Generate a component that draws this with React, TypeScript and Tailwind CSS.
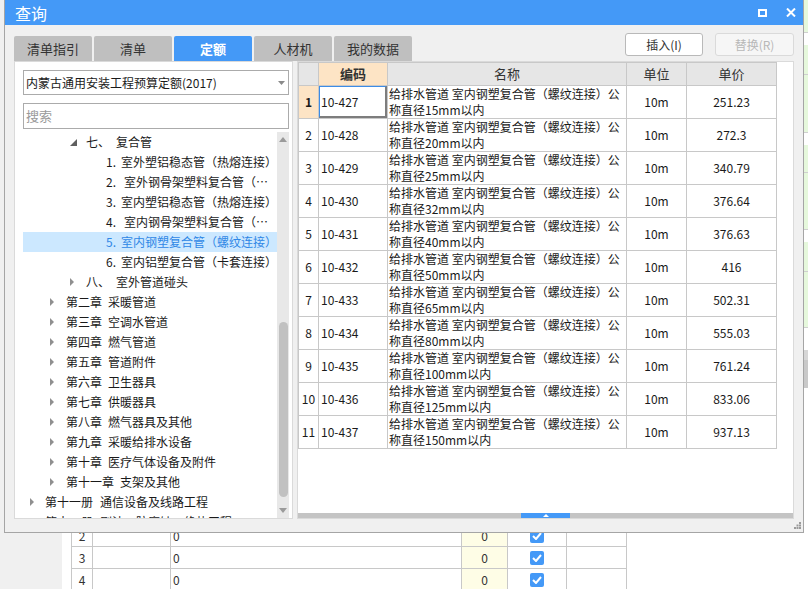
import React from "react";

const FONT = "font-['Noto_Sans_CJK_SC','Noto_Sans',sans-serif]";

const quotaRows = [
  { code: "10-427", size: "15", price: "251.23" },
  { code: "10-428", size: "20", price: "272.3" },
  { code: "10-429", size: "25", price: "340.79" },
  { code: "10-430", size: "32", price: "376.64" },
  { code: "10-431", size: "40", price: "376.63" },
  { code: "10-432", size: "50", price: "416" },
  { code: "10-433", size: "65", price: "502.31" },
  { code: "10-434", size: "80", price: "555.03" },
  { code: "10-435", size: "100", price: "761.24" },
  { code: "10-436", size: "125", price: "833.06" },
  { code: "10-437", size: "150", price: "937.13" },
];

const pipeItems = [
  "室外塑铝稳态管（热熔连接）",
  "室外钢骨架塑料复合管（…",
  "室内塑铝稳态管（热熔连接）",
  "室内钢骨架塑料复合管（…",
  "室内钢塑复合管（螺纹连接）",
  "室内铝塑复合管（卡套连接）",
];

const chapters = [
  ["第二章", "采暖管道"],
  ["第三章", "空调水管道"],
  ["第四章", "燃气管道"],
  ["第五章", "管道附件"],
  ["第六章", "卫生器具"],
  ["第七章", "供暖器具"],
  ["第八章", "燃气器具及其他"],
  ["第九章", "采暖给排水设备"],
  ["第十章", "医疗气体设备及附件"],
  ["第十一章", "支架及其他"],
];

function Collapsed() {
  return (
    <svg width="5" height="8" viewBox="0 0 5 8">
      <path d="M0 0L4 4L0 8Z" fill="#8f8f8f" />
    </svg>
  );
}

function Expanded() {
  return (
    <svg width="7" height="7" viewBox="0 0 7 7">
      <path d="M7 0V7H0Z" fill="#5f5f5f" />
    </svg>
  );
}

function Check() {
  return (
    <div className="w-[14px] h-[14px] rounded-[2px] bg-[#4499f7] flex items-center justify-center">
      <svg width="10" height="8" viewBox="0 0 10 8">
        <path d="M1 4L4 7L9 1" stroke="white" strokeWidth="2" fill="none" />
      </svg>
    </div>
  );
}

// the main window behind the dialog; only its last rows show
function BackgroundApp() {
  return (
    <div className="flex h-full">
      <div className="w-[62px] bg-[#f0f0f0]" />
      <div className="w-[9px] bg-white" />
      <div className="flex-1 bg-white pt-[524px]">
        {["2", "3", "4"].map((n) => (
          <div key={n} className="w-[556px] h-[22px] flex border-t border-[#c8c8c8] text-[12px] text-[#333]">
            <div className="w-[21px] border-l border-[#c8c8c8] flex items-center justify-center">{n}</div>
            <div className="w-[78px] border-l border-[#c8c8c8]" />
            <div className="w-[291px] border-l border-[#c8c8c8] flex items-center pl-[2px]">0</div>
            <div className="w-[46px] border-l border-[#c8c8c8] bg-[#fefde6] flex items-center justify-center">0</div>
            <div className="w-[59px] border-l border-[#c8c8c8] flex items-center justify-center">
              <Check />
            </div>
            <div className="w-[61px] border-x border-[#c8c8c8]" />
          </div>
        ))}
      </div>
      <div className="w-[5px] flex flex-col">
        <div className="h-[33px] bg-[#e6f8dc] border-b border-[#cfcfcf]" />
        <div className="h-[12px] bg-white" />
        <div className="h-[30px] bg-[#e6f8dc] border-b border-[#cfcfcf]" />
        <div className="h-[58px] bg-[#e6f8dc] border-b border-[#cfcfcf]" />
        <div className="h-[12px] bg-white" />
        <div className="h-[28px] bg-[#e6f8dc] border-b border-[#cfcfcf]" />
        <div className="h-[57px] bg-[#e6f8dc] border-b border-[#cfcfcf]" />
        <div className="h-[12px] bg-white" />
        <div className="h-[30px] bg-[#e6f8dc] border-b border-[#cfcfcf]" />
        <div className="h-[56px] bg-[#e6f8dc] border-b border-[#cfcfcf]" />
        <div className="h-[22px] bg-white" />
        <div className="h-[10px] bg-[#d6d6d6]" />
        <div className="h-[28px] bg-[#c9c9c9]" />
        <div className="flex-1 bg-white" />
      </div>
    </div>
  );
}

function Tree() {
  return (
    <div className="flex-1 flex overflow-hidden mt-[3px]">
      <div className="flex-1 overflow-hidden text-[12px] text-[#1a1a1a]">
        <div className="h-[20px] flex items-center pl-[47px]">
          <span className="w-[16px] flex"><Expanded /></span>
          <span className="w-[30px]">七、</span>
          <span>复合管</span>
        </div>
        {pipeItems.map((t, i) => (
          <div
            key={t}
            className={`h-[20px] flex items-center pl-[83px] whitespace-nowrap ${
              i === 4 ? "bg-[#cce8ff] text-[#2f87e6]" : ""
            }`}
          >
            <span className="w-[18px]">{i + 1}.</span>
            <span>{t}</span>
          </div>
        ))}
        <div className="h-[20px] flex items-center pl-[47px]">
          <span className="w-[16px] flex"><Collapsed /></span>
          <span className="w-[30px]">八、</span>
          <span>室外管道碰头</span>
        </div>
        {chapters.map(([a, b]) => (
          <div key={a} className="h-[20px] flex items-center pl-[27px] whitespace-nowrap">
            <span className="w-[16px] flex"><Collapsed /></span>
            <span>{a}</span>
            <span className="ml-[6px]">{b}</span>
          </div>
        ))}
        <div className="h-[20px] flex items-center pl-[7px] whitespace-nowrap">
          <span className="w-[15px] flex"><Collapsed /></span>
          <span>第十一册</span>
          <span className="ml-[7px]">通信设备及线路工程</span>
        </div>
        <div className="h-[20px] flex items-center pl-[7px] whitespace-nowrap">
          <span className="w-[15px] flex"><Collapsed /></span>
          <span>第十二册</span>
          <span className="ml-[7px]">刷油、防腐蚀、绝热工程</span>
        </div>
      </div>
      {/* scrollbar */}
      <div className="w-[12px] bg-[#e8e8e8] flex flex-col items-center">
        <div className="h-[14px] flex items-center justify-center">
          <svg width="8" height="5" viewBox="0 0 8 5"><path d="M0 5L4 0L8 5Z" fill="#9a9a9a" /></svg>
        </div>
        <div className="h-[176px]" />
        <div className="h-[175px] w-[9px] rounded-full bg-[#c1c1c1]" />
        <div className="flex-1" />
        <div className="h-[10px] flex items-start justify-center">
          <svg width="8" height="5" viewBox="0 0 8 5"><path d="M0 0L4 5L8 0Z" fill="#9a9a9a" /></svg>
        </div>
      </div>
    </div>
  );
}

function LeftPanel() {
  return (
    <div className="w-[279px] bg-white border border-[#dadada] flex flex-col pt-[8px] pl-[8px] pr-[3px]">
      <div className="h-[25px] border border-[#ababab] flex items-center justify-between pl-[2px] pr-[3px] text-[12px] text-[#1a1a1a]">
        <span>内蒙古通用安装工程预算定额(2017)</span>
        <svg width="7" height="4" viewBox="0 0 7 4"><path d="M0 0L3.5 4L7 0Z" fill="#8a8a8a" /></svg>
      </div>
      <div className="mt-[8px] h-[26px] border border-[#ababab] flex items-center pl-[2px] text-[13px] text-[#9a9a9a]">
        搜索
      </div>
      <Tree />
    </div>
  );
}

function QuotaTable() {
  const cell = "border-r border-b border-[#c8c8c8]";
  return (
    <div className="border-l border-t border-[#c8c8c8] w-[479px] text-[12px] text-[#1a1a1a]">
      <div className="flex h-[23px] text-[13px] text-[#333]">
        <div className={`w-[20px] bg-[#e6e6e6] ${cell}`} />
        <div className={`w-[69px] bg-[#fde4c5] font-bold flex items-center justify-center ${cell}`}>编码</div>
        <div className={`w-[239px] bg-[#e6e6e6] flex items-center justify-center ${cell}`}>名称</div>
        <div className={`w-[60px] bg-[#e6e6e6] flex items-center justify-center ${cell}`}>单位</div>
        <div className={`w-[90px] bg-[#e6e6e6] flex items-center justify-center ${cell}`}>单价</div>
      </div>
      {quotaRows.map((r, i) => (
        <div key={r.code} className="flex h-[33px]">
          <div
            className={`w-[20px] flex items-center justify-center ${cell} ${
              i === 0 ? "bg-[#fde4c5] font-bold" : ""
            }`}
          >
            {i + 1}
          </div>
          <div className={`w-[69px] ${cell}`}>
            {i === 0 ? (
              <div className="h-full border-l border-t border-[#3c8ce6] border-r-2 border-b-2 border-r-[#7d7d7d] border-b-[#7d7d7d] flex items-center pl-[1px]">
                {r.code}
              </div>
            ) : (
              <div className="h-full flex items-center pl-[2px]">{r.code}</div>
            )}
          </div>
          <div className={`w-[239px] pl-[1px] leading-[16px] whitespace-nowrap overflow-hidden ${cell}`}>
            <div>给排水管道 室内钢塑复合管（螺纹连接）公</div>
            <div>称直径{r.size}mm以内</div>
          </div>
          <div className={`w-[60px] flex items-center justify-center ${cell}`}>10m</div>
          <div className={`w-[90px] flex items-center justify-center ${cell}`}>{r.price}</div>
        </div>
      ))}
    </div>
  );
}

function RightPanel() {
  return (
    <div className="flex-1 bg-white border border-[#dadada] flex flex-col">
      <QuotaTable />
      <div className="flex-1" />
      <div className="h-[5px] bg-[#c4c4c4] flex justify-center">
        <div className="w-[49px] bg-[#4499f7] flex items-center justify-center">
          <svg width="6" height="3" viewBox="0 0 6 3"><path d="M0 3L3 0L6 3Z" fill="white" /></svg>
        </div>
      </div>
    </div>
  );
}

function QueryDialog() {
  const tabs = ["清单指引", "清单", "定额", "人材机", "我的数据"];
  return (
    <div className="absolute left-[4px] top-0 w-[800px] h-[533px] bg-[#f0f0f0] border border-t-0 border-[#a5a5a5] flex flex-col">
      {/* title bar */}
      <div className="h-[25px] bg-[#4499f7] flex items-center justify-between pl-[10px] pr-[7px]">
        <span className="text-[16px] text-white leading-none">查询</span>
        <div className="flex items-center gap-[19px]">
          <div className="w-[9px] h-[8px] border-2 border-white" />
          <svg width="10" height="9" viewBox="0 0 10 9">
            <path d="M1 0.5L9 8.5M9 0.5L1 8.5" stroke="white" strokeWidth="2" />
          </svg>
        </div>
      </div>

      <div className="flex-1 flex flex-col px-[9px]">
        {/* tabs + actions */}
        <div className="h-[36px] flex justify-between">
          <div className="self-end flex gap-[2px]">
            {tabs.map((t) => (
              <div
                key={t}
                className={`w-[78px] h-[25px] rounded-t-[2px] flex items-center justify-center text-[13px] ${
                  t === "定额" ? "bg-[#4499f7] text-white font-bold" : "bg-[#bfbfbf] text-[#333]"
                }`}
              >
                {t}
              </div>
            ))}
          </div>
          <div className="mt-[8px] flex gap-[12px] text-[12px]">
            <div className="w-[78px] h-[23px] bg-white border border-[#b9b9b9] rounded-[3px] flex items-center justify-center text-[#333]">
              插入(I)
            </div>
            <div className="w-[79px] h-[23px] bg-[#f6f6f6] border border-[#dadada] rounded-[3px] flex items-center justify-center text-[#b8b8b8]">
              替换(R)
            </div>
          </div>
        </div>

        {/* content */}
        <div className="h-[458px] flex gap-[4px]">
          <LeftPanel />
          <RightPanel />
        </div>

        {/* footer grip */}
        <div className="flex-1 flex justify-end items-end -mr-[7px] pb-[3px]">
          <svg width="7" height="7" viewBox="0 0 7 7" fill="#9a9a9a">
            <rect x="5" y="0" width="2" height="2" />
            <rect x="2.5" y="2.5" width="2" height="2" />
            <rect x="5" y="2.5" width="2" height="2" />
            <rect x="0" y="5" width="2" height="2" />
            <rect x="2.5" y="5" width="2" height="2" />
            <rect x="5" y="5" width="2" height="2" />
          </svg>
        </div>
      </div>
    </div>
  );
}

export default function App() {
  return (
    <div className={`relative w-[808px] h-[589px] overflow-hidden bg-[#f0f0f0] ${FONT}`}>
      <BackgroundApp />
      <QueryDialog />
    </div>
  );
}
